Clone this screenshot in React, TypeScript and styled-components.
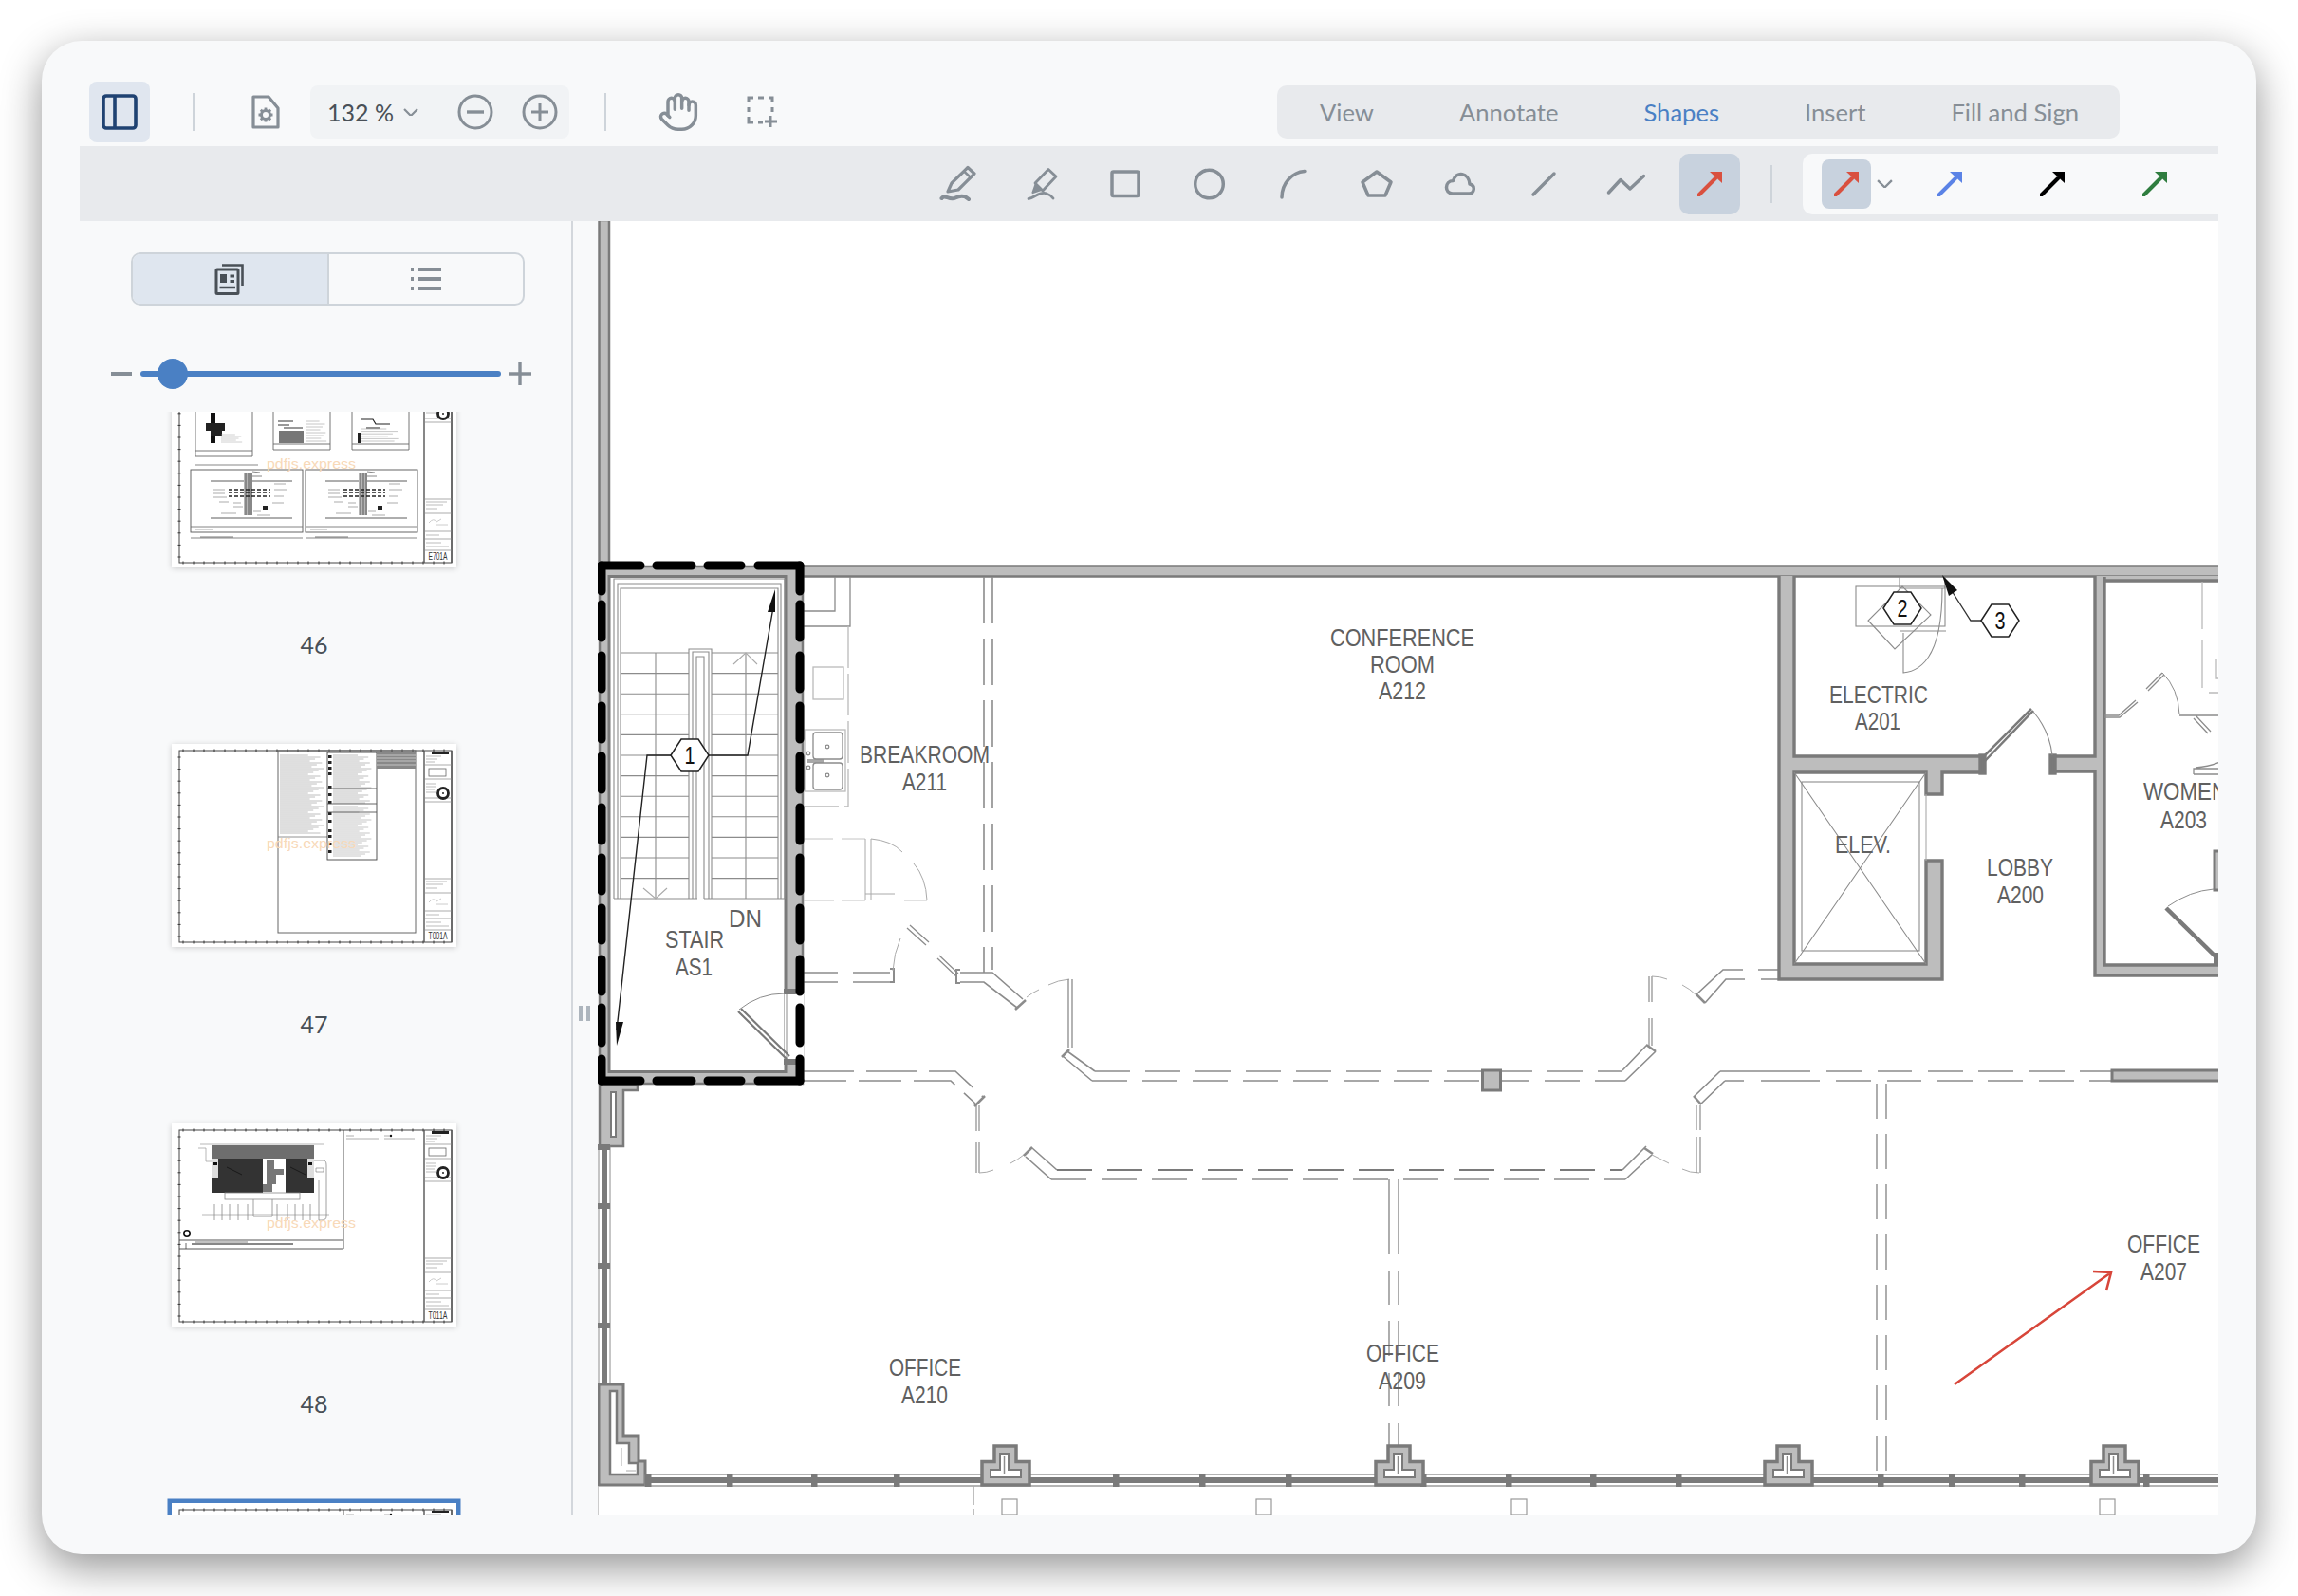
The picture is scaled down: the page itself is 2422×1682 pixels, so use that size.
import React from "react";
import styled, { createGlobalStyle } from "styled-components";
import { Hand } from "lucide-react";

const Global = createGlobalStyle`
  html, body { margin: 0; padding: 0; background: #fff; }
  #root { width: 2422px; height: 1682px; }
`;

const Page = styled.div`
  width: 2422px; height: 1682px; box-sizing: border-box; padding: 43px 44px 44px;
  background: #fff; overflow: hidden; font-family: Lato, "Noto Sans", sans-serif;
`;
const Card = styled.div`
  height: 1595px; box-sizing: border-box; padding: 43px 40px 41px; border-radius: 42px;
  background: #f8f9fa; box-shadow: 0 14px 44px rgba(0,0,0,.42); display: flex; flex-direction: column;
`;
const TopBar = styled.div`
  height: 64px; flex: none; display: flex; align-items: center; padding: 0 104px 0 10px; margin-bottom: 4px;
`;
const ToggleButton = styled.div`
  width: 64px; height: 64px; border-radius: 8px; background: #e0e6ef; display: flex; align-items: center; justify-content: center;
`;
const Divider = styled.div<{ $ml: number; $mr: number }>`
  width: 2px; height: 40px; background: #ced4da; flex: none; margin-left: ${p => p.$ml}px; margin-right: ${p => p.$mr}px;
`;
const PlainIcon = styled.div<{ $mr: number }>`
  display: flex; align-items: center; color: #868e96; margin-right: ${p => p.$mr}px;
`;
const ZoomBox = styled.div`
  width: 273px; height: 56px; box-sizing: border-box; padding-left: 18px; background: #f1f3f5; border-radius: 8px;
  display: flex; align-items: center; flex: none;
`;
const ZoomValue = styled.span`
  font-size: 25px; color: #495057; width: 80px; flex: none; white-space: nowrap;
`;
const ZoomChevron = styled.div`
  width: 57px; flex: none; display: flex;
`;
const ZoomAction = styled.div<{ $w: number }>`
  width: ${p => p.$w}px; flex: none; display: flex;
`;
const Tabs = styled.div`
  margin-left: auto; height: 56px; width: 888px; box-sizing: border-box; padding: 0 43px 0 45px; background: #e8eaed; border-radius: 10px;
  display: flex; align-items: center; justify-content: space-between;
`;
const Tab = styled.span<{ $active?: boolean }>`
  font-size: 25.6px; color: ${p => (p.$active ? "#4a80c4" : "#868e96")};
`;
const ShapeBar = styled.div`
  height: 79px; flex: none; background: #e8eaed; display: flex; align-items: center; justify-content: flex-end;
`;
const ToolGroup = styled.div`
  display: flex; gap: 24px;
`;
const Tool = styled.div<{ $active?: boolean }>`
  width: 64px; height: 64px; border-radius: 10px; display: flex; align-items: center; justify-content: center;
  background: ${p => (p.$active ? "#c8d2de" : "transparent")};
`;
const BarDivider = styled.div`
  width: 2px; height: 40px; margin: 0 32px; background: #ced4da;
`;
const PresetBox = styled.div`
  width: 438px; height: 64px; box-sizing: border-box; padding-left: 20px; border-radius: 10px 0 0 10px; background: #f8f9fa;
  display: flex; align-items: center;
`;
const Preset = styled.div<{ $active?: boolean }>`
  width: 52px; height: 52px; flex: none; border-radius: 8px; display: flex; align-items: center; justify-content: center;
  background: ${p => (p.$active ? "#c8d2de" : "transparent")};
`;
const PresetChevron = styled.div`
  width: 57px; padding-left: 6px; box-sizing: border-box; display: flex;
`;
const PresetGap = styled.div`
  width: 56px; flex: none;
`;
const Main = styled.div`
  flex: 1; min-height: 0; display: flex;
`;
const Sidebar = styled.aside`
  width: 520px; flex: none; box-sizing: border-box; padding-top: 33px; border-right: 2px solid #d3d7dc; display: flex; flex-direction: column;
`;
const Segments = styled.div`
  flex: none; align-self: flex-start; margin-left: 54px; width: 415px; height: 56px; box-sizing: border-box; border: 2px solid #ced4da; border-radius: 10px;
  display: flex; overflow: hidden;
`;
const Segment = styled.div<{ $active?: boolean }>`
  flex: 1; display: flex; align-items: center; justify-content: center; background: ${p => (p.$active ? "#dfe6ef" : "transparent")};
  & + & { border-left: 2px solid #ced4da; }
`;
const SliderRow = styled.div`
  flex: none; height: 32px; margin-top: 56px; padding-left: 33px; display: flex; align-items: center;
`;
const SliderMark = styled.div`
  display: flex; flex: none;
`;
const Track = styled.div`
  position: relative; width: 380px; height: 6px; margin: 0 8px 0 9px; border-radius: 3px; background: #4a80c4;
`;
const Thumb = styled.div`
  position: absolute; left: 18px; top: -13px; width: 32px; height: 32px; border-radius: 50%; background: #4a80c4;
`;
const ThumbScroll = styled.div`
  flex: 1; min-height: 0; margin-top: 24px; overflow: hidden; padding-left: 97px;
`;
const ThumbList = styled.div`
  margin-top: -50px; display: flex; flex-direction: column; width: 300px;
`;
const ThumbItem = styled.div`
  height: 400px; flex: none; display: flex; flex-direction: column; align-items: center;
`;
const Sheet = styled.div<{ $selected?: boolean }>`
  width: 300px; height: 214px; background: #fff; flex: none;
  box-shadow: ${p => (p.$selected ? "0 0 0 4.5px #4a80c4" : "0 1px 6px rgba(0,0,0,.18)")};
`;
const SheetArt = styled.svg`
  display: block; width: 300px; height: 214px;
`;
const PageNumber = styled.div`
  margin-top: 66px; height: 30px; line-height: 30px; font-size: 25px; color: #495057;
`;
const Viewer = styled.div`
  flex: 1; min-width: 0; display: flex;
`;
const Gutter = styled.div`
  width: 26px; flex: none; box-sizing: border-box; padding: 827px 0 0 6px; display: flex; gap: 4px;
`;
const GripBar = styled.div`
  width: 4px; height: 16px; background: #adb5bd;
`;
const Plan = styled.svg`
  flex: 1; display: block; width: 1708px; height: 1364px; background: #fff;
`;

const GREY = "#868e96";
const WALL = "#bdbdbd";
const INK = "#7a7a7a";
const THIN = "#8c8c8c";
const TXT = "#606060";

const ToolSvg = ({ children }: { children: React.ReactNode }) => (
  <svg width="64" height="64" viewBox="0 0 64 64" fill="none" stroke={GREY} strokeWidth="3.5" strokeLinecap="round" strokeLinejoin="round">
    {children}
  </svg>
);

const ArrowIcon = ({ color }: { color: string }) => (
  <svg width="26" height="26" viewBox="0 0 26 26">
    <path d="M1.5 24.5 L19 7" stroke={color} strokeWidth="4" strokeLinecap="round" />
    <path d="M13 0 H26 V12 Z" fill={color} />
  </svg>
);

const Chevron = ({ w = 16 }: { w?: number }) => (
  <svg width={w} height={w * 0.56} viewBox="0 0 16 9" fill="none" stroke={GREY} strokeWidth="2.2">
    <path d="M1 1 L8 8 L15 1" />
  </svg>
);

const shapeIcons: React.ReactNode[] = [
  <>
    <path d="M21 40 L25 31 L42 14.5 L49 21 L32 38 Z" strokeWidth="3.2" />
    <path d="M38 18.5 L45 25" strokeWidth="2.5" />
    <path d="M14.5 47 C17 42 23 50 29 46.5 C34 44 39 44 43 48" strokeWidth="4" />
  </>,
  <>
    <path d="M25 31 L39 16.5 L47 24 L33 39 Z" strokeWidth="2.8" />
    <path d="M22.5 41 L25.5 32.5 L31.5 38 Z" fill={GREY} strokeWidth="2.2" />
    <path d="M18 47.5 C24 47 30 39 37 42 C40 43 42 44 44 47" strokeWidth="2.8" />
  </>,
  <rect x="18" y="19" width="28" height="25.5" rx="1.5" />,
  <circle cx="32.5" cy="32" r="14.8" />,
  <path d="M21 46 C21 31 32 19.5 45 18.5" />,
  <path d="M33 19 L48 30 L42 44 L24 44 L18 30 Z" />,
  <path d="M25 42 H42.5 C48 42 49.5 33.5 43 32 C42 20 29 17.5 25.5 28.5 C16.5 28.5 16 42 25 42 Z" />,
  <path d="M22 43 L44 21" />,
  <path d="M13.5 41 L26 27.5 L36 37 L50.5 23.5" />,
];

/* ---------- thumbnails ---------- */
const idx = (n: number) => Array.from({ length: n }, (_, i) => i);

const Frame = ({ name }: { name?: string }) => (
  <g>
    <rect x="8" y="7" width="287" height="202" fill="none" stroke="#444" strokeWidth="1" />
    {idx(26).map(i => <path key={"t" + i} d={`M${12 + i * 11} 5.5 v3 M${12 + i * 11} 207.5 v3`} stroke="#333" strokeWidth="1" />)}
    {idx(16).map(i => <path key={"l" + i} d={`M6.5 ${14 + i * 12.6} h3`} stroke="#333" strokeWidth="1" />)}
    <path d="M266 7 V209 M295 7 V209" stroke="#555" strokeWidth="1.4" fill="none" />
    <path d="M266 22 H295 M266 37 H295 M266 57 H295 M266 61 H295 M266 142 H295 M266 157 H295 M266 176 H295 M266 184 H295 M266 196 H295" stroke="#888" strokeWidth=".7" />
    <rect x="274" y="8" width="18" height="3" fill="#222" />
    <path d="M268 13 h16 M268 16 h12 M268 19 h9" stroke="#aaa" strokeWidth=".8" />
    <rect x="271" y="26" width="18" height="8" fill="none" stroke="#666" strokeWidth=".8" />
    <path d="M268 42 h10 M268 45 h11 M268 48 h9 M268 51 h11" stroke="#aaa" strokeWidth=".8" />
    <circle cx="286" cy="52" r="5.5" fill="#fff" stroke="#222" strokeWidth="2.8" />
    <circle cx="286" cy="52" r="1" fill="#222" />
    <path d="M268 145 h22 M268 148 h18 M268 152 h12 M268 180 h14 M268 188 h16 M268 192 h24" stroke="#aaa" strokeWidth=".8" />
    <path d="M271 167 q5 -6 8 -1 l5 -3 M279 169 h12" stroke="#ccc" strokeWidth="1" fill="none" />
    {name && (
      <text x="280.5" y="206" textAnchor="middle" fontFamily="Liberation Sans" fontSize="10" fill="#333" textLength="20" lengthAdjust="spacingAndGlyphs">{name}</text>
    )}
  </g>
);

const Watermark = () => (
  <text x="147" y="110" textAnchor="middle" fontFamily="Liberation Sans" fontSize="14.5" fill="#f8d9b8" textLength="94" lengthAdjust="spacingAndGlyphs">pdfjs.express</text>
);

const TextBlock = ({ x, y, w, rows, step = 2, color = "#999" }: { x: number; y: number; w: number; rows: number; step?: number; color?: string }) => (
  <path
    d={idx(rows).map(i => `M${x} ${y + i * step} h${w * (0.62 + ((i * 7) % 10) * 0.038)}`).join(" ")}
    stroke={color}
    strokeWidth=".55"
    fill="none"
  />
);

const DetailPanel = ({ x }: { x: number }) => (
  <g transform={`translate(${x} 0)`}>
    <rect x="0" y="111" width="118" height="66" fill="none" stroke="#555" strokeWidth=".9" />
    <path d="M0 171 H118" stroke="#666" strokeWidth=".8" />
    <path d="M21 123 H107 M21 162 H107" stroke="#333" strokeWidth=".8" />
    <rect x="56" y="115" width="9" height="44" fill="#b5b5b5" />
    <path d="M58 115 V159 M61 115 V159 M64 115 V159" stroke="#333" strokeWidth=".7" />
    <path d="M40 132 h44 M40 135 h44 M40 139 h44" stroke="#222" strokeWidth="1.3" strokeDasharray="4 2" />
    <rect x="76" y="149" width="5" height="5" fill="#222" />
    <path d="M45 150 h10 M45 146 h8 M24 136 h12 M66 155 h8 M24 132 h12 M24 140 h14 M88 126 h12 M88 132 h14 M88 139 h10 M86 146 h12 M30 145 h10 M32 157 h16 M70 159 h14" stroke="#888" strokeWidth=".7" />
    <path d="M65 113 l8 1 M65 118 h10" stroke="#555" strokeWidth=".7" />
    <path d="M5 174 h18" stroke="#aaa" strokeWidth="1" />
    <path d="M0 183 H118" stroke="#888" strokeWidth="1.2" />
    <path d="M10 182 h35" stroke="#555" strokeWidth=".8" />
  </g>
);

const SheetE701 = () => (
  <SheetArt viewBox="0 0 300 214">
    <Frame name="E701A" />
    <path d="M25 0 V97 H85 V0 M25 91 H85 M107 0 V90 H167 V0 M107 84 H167 M190 0 V90 H250 V0 M190 84 H250" fill="none" stroke="#666" strokeWidth=".9" />
    <rect x="41" y="51" width="5" height="32" fill="#111" />
    <path d="M36 62 h20 v8 h-3 v6 h-12 v-6 h-5 Z" fill="#222" />
    <TextBlock x={52} y={74} w={24} rows={5} color="#aaa" />
    <rect x="113" y="70" width="26" height="13" fill="#777" />
    <path d="M112 60 h16 M112 64 h12 M118 67 h20" stroke="#333" strokeWidth="1" />
    <TextBlock x={142} y={60} w={22} rows={8} step={3} color="#999" />
    <path d="M200 58 h12 l3 5 h15 M205 67 h14" stroke="#222" strokeWidth="1.2" fill="none" />
    <TextBlock x={199} y={68} w={44} rows={6} step={2.6} color="#999" />
    <rect x="196" y="72" width="3" height="11" fill="#222" />
    <path d="M25 106 H91" stroke="#888" strokeWidth="1.2" />
    <DetailPanel x={20} />
    <DetailPanel x={141} />
    <Watermark />
  </SheetArt>
);

const SheetT001 = () => (
  <SheetArt viewBox="0 0 300 214">
    <Frame name="T001A" />
    <rect x="112" y="7" width="145" height="192" fill="none" stroke="#666" strokeWidth="1" />
    <path d="M112 98 H164" stroke="#777" strokeWidth=".8" />
    <TextBlock x={114} y={12} w={48} rows={42} color="#888" />
    <rect x="164" y="9" width="52" height="113" fill="#fff" stroke="#444" strokeWidth=".9" />
    <TextBlock x={170} y={12} w={42} rows={26} step={2} color="#888" />
    <TextBlock x={170} y={66} w={42} rows={27} step={2} color="#999" />
    {[12, 18, 24, 30, 44, 52, 60, 72, 80, 90, 96, 104, 112].map(y => <rect key={y} x="165" y={y} width="3.5" height="3" fill="#222" />)}
    <path d="M164 47 H216 M164 63 H216 M164 72 H216" stroke="#555" strokeWidth=".9" />
    <rect x="216" y="9" width="41" height="17" fill="#888" />
    <path d="M216 12 H257 M216 15 H257 M216 18 H257 M216 22 H257" stroke="#eee" strokeWidth=".6" />
    <Watermark />
  </SheetArt>
);

const SheetT011 = ({ partial }: { partial?: boolean }) => (
  <SheetArt viewBox="0 0 300 214">
    <Frame name={partial ? undefined : "T011A"} />
    <path d="M181 7 V132 M8 123 H181 M8 132 H181" stroke="#444" strokeWidth=".9" fill="none" />
    <path d="M21 127 H128" stroke="#111" strokeWidth="1" />
    <path d="M15 126 v6" stroke="#444" strokeWidth=".8" />
    <path d="M25 125 h55" stroke="#777" strokeWidth=".9" />
    <path d="M184 13 h8 M224 13 h8 M184 16 h34 M224 16 h32" stroke="#999" strokeWidth=".8" />
    <circle cx="231" cy="13" r="1.2" fill="#111" />
    <circle cx="16" cy="116" r="3.2" fill="#fff" stroke="#111" strokeWidth="1.6" />
    <rect x="42" y="23" width="108" height="14" fill="#6e6e6e" />
    <rect x="42" y="37" width="108" height="36" fill="#333" />
    <rect x="96" y="37" width="24" height="36" fill="#fff" />
    <path d="M100 38 h8 v10 h10 v6 h-8 v10 h-4 v8 h-10 v-8 h4 Z" fill="#777" />
    <rect x="42" y="37" width="7" height="20" fill="#ddd" />
    <rect x="143" y="37" width="7" height="20" fill="#ddd" />
    <rect x="44" y="41" width="4" height="3" fill="#111" />
    <rect x="144" y="41" width="4" height="3" fill="#111" />
    <path d="M58 46 l16 8 M125 46 l16 8" stroke="#111" strokeWidth=".8" />
    <path d="M30 22 H160 M28 26 H36 V40 H42 M32 96 H166" stroke="#999" strokeWidth=".7" fill="none" />
    <rect x="56" y="73" width="79" height="7" fill="none" stroke="#888" strokeWidth=".8" />
    <path d="M45 85 V102 M53 85 V102 M61 85 V102 M70 85 V102 M80 85 V102 M111 85 V102 M122 85 V102 M130 85 V102 M138 85 V102 M146 85 V102" stroke="#888" strokeWidth=".8" />
    <path d="M86 80 V98 H106 V80" fill="none" stroke="#888" strokeWidth=".8" />
    <path d="M150 39 H160 Q163 39 163 44 V98 Q163 102 158 102 H155 V60" fill="none" stroke="#888" strokeWidth=".8" />
    <path d="M152 47 h8 v4 h-8 Z" fill="none" stroke="#888" strokeWidth=".7" />
    {!partial && <Watermark />}
  </SheetArt>
);

/* ---------- floor plan ---------- */
const Room = ({ x, y, w, children }: { x: number; y: number; w: number; children: string }) => (
  <text x={x} y={y} textLength={w} lengthAdjust="spacingAndGlyphs" fontFamily="Liberation Sans" fontSize="25" fill={TXT}>{children}</text>
);

const Callout = ({ cx, cy, label }: { cx: number; cy: number; label: string }) => (
  <g>
    <path d={`M${cx - 20} ${cy} L${cx - 9} ${cy - 17} H${cx + 9} L${cx + 20} ${cy} L${cx + 9} ${cy + 17} H${cx - 9} Z`} fill="#fff" stroke="#222" strokeWidth="1.5" />
    <text x={cx} y={cy + 9} textAnchor="middle" fontFamily="Liberation Sans" fontSize="25" fill="#111" textLength="11" lengthAdjust="spacingAndGlyphs">{label}</text>
  </g>
);

const Pier = ({ x }: { x: number }) => (
  <g transform={`translate(${x} 1524)`}>
    <path d="M0 41 V16.5 H13 V0 H36 V16.5 H50 V41 Z" fill={WALL} stroke={INK} strokeWidth="3.5" />
    <path d="M19 8 H28 V25 H41 V33 H9 V25 H19 Z" fill="#fff" stroke={INK} strokeWidth="2" />
    <path d="M23.5 10 V29" stroke={THIN} strokeWidth="1.5" />
  </g>
);

const stairDashes: [number, number][] = [
  [596, 623], [637, 672], [691, 726], [744, 779], [797, 832], [851, 886], [904, 939], [957, 991], [1011, 1045], [1062, 1099], [1116, 1139],
];
const widthDashes: [number, number][] = [[634, 675], [692, 729], [746, 781], [799, 843]];
const mullions = [683, 769, 858, 945, 1176, 1267, 1358, 1500, 1590, 1679, 1769, 1982, 2057, 2131, 2262];
const boxes = [1056, 1324, 1593, 2213];
const treads = idx(12).map(i => 688 + i * 21.6);

const Blueprint = () => (
  <Plan viewBox="630 233 1708 1364">
    {/* left wall above stair, top wall */}
    <rect x="631.5" y="232" width="10.5" height="366" fill={WALL} stroke={INK} strokeWidth="2.5" />
    <rect x="846" y="596.5" width="1500" height="11" fill={WALL} stroke={INK} strokeWidth="2.5" />

    {/* stair enclosure */}
    <rect x="632" y="597" width="214" height="545" fill={WALL} stroke={INK} strokeWidth="2.5" />
    <rect x="642" y="607.5" width="186" height="522" fill="#fff" stroke={INK} strokeWidth="3" />
    <rect x="827" y="1048" width="20" height="68" fill="#fff" />
    <rect x="826" y="1042" width="13" height="6" fill={INK} />
    <rect x="826" y="1116" width="13" height="6" fill={INK} />
    <path d="M829 1048 V1116" stroke={THIN} strokeWidth="1" />
    <path d="M778 1066 L829 1116 M781 1063 L832 1113" stroke={INK} strokeWidth="2.2" />
    <path d="M779 1064 Q800 1047 827 1047" stroke={THIN} strokeWidth="1" fill="none" />
    <g stroke={THIN} strokeWidth="1.1" fill="none">
      <path d="M647 947 V610 H827 V947 M651 947 V615 H823 V947 M654 947 V620 H820 V947" />
      <path d="M647 947 H735 M742 947 H827" />
      <path d="M726 947 V684 H750 V947 M730 947 V687 H747 V947 M734 947 V692 H742 V947" />
      {treads.map(y => <path key={y} d={`M654 ${y} H726 M750 ${y} H820`} />)}
      <path d="M691 688 V947 M786 688 V947" />
      <path d="M773 700 L786 688 L798 700 M678 936 L691 947 L703 936" stroke="#aaa" />
    </g>
    <path d="M707 796 H682 L650 1085 M747 796 H788 L815 640" fill="none" stroke="#222" strokeWidth="1.4" />
    <path d="M650 1102 L649 1077 L657 1077 Z M817 621 L809 645 L817 645 Z" fill="#111" />
    <Callout cx={727} cy={796} label="1" />
    <Room x={768} y={977} w={35}>DN</Room>
    <Room x={701} y={999} w={62}>STAIR</Room>
    <Room x={712} y={1028} w={39}>AS1</Room>

    {/* breakroom */}
    <g fill="none" stroke={THIN} strokeWidth="1.3">
      <path d="M880 608 V644 H847 M896 608 V660 H847" />
      <path d="M894 660 V850 H847" strokeDasharray="44 6" stroke="#bbb" />
      <rect x="857" y="703" width="32" height="34" stroke="#bbb" />
      <rect x="848" y="769" width="43" height="65" stroke="#bbb" />
      <rect x="857" y="772" width="31" height="28" rx="3" />
      <rect x="857" y="804" width="31" height="28" rx="3" />
      <circle cx="872" cy="787" r="1.8" />
      <circle cx="872" cy="817" r="1.8" />
      <circle cx="852" cy="794" r="1.8" />
      <circle cx="852" cy="809" r="1.8" />
      <path d="M851 801 H868 M851 803 H868" />
      <path d="M847 884 H878 M887 884 H912 M847 949 H879 M887 949 H912 M953 949 H977" stroke="#c4c4c4" strokeWidth="1" />
      <path d="M912 884 V949 M918 884 V949 M912 942 H943" stroke="#aaa" strokeWidth="1" />
      <path d="M918 884 Q940 886 951 898 M963 910 Q976 925 977 949" stroke="#aaa" strokeWidth="1" />
    </g>
    <g fill="none" stroke={THIN} strokeWidth="1.6">
      <path d="M1037 608 V1025 M1046 608 V1022" strokeDasharray="49 16" />
      <path d="M847 1025 H883 M899 1025 H938 M847 1035 H883 M899 1035 H938" />
      <path d="M938 1021 h4 v14 h-4" strokeWidth="2" />
      <path d="M941 1023 Q942 1005 949 989" strokeWidth="1" stroke="#aaa" />
      <path d="M959 975 L979 993 M956 978 L976 996" strokeWidth="1.3" />
      <path d="M990 1007 L1010 1026 M988 1010 L1008 1029" strokeWidth="1.3" />
      <path d="M1012 1022 h-4 v14 h4" strokeWidth="2" />
      <path d="M1012 1025 H1046 L1078 1053 M1012 1035 H1037 L1072 1062" />
      <path d="M1070 1064 L1081 1054" strokeWidth="2.5" />
      <path d="M1082 1051 Q1088 1046 1095 1043 M1105 1038 Q1115 1033 1127 1032" strokeWidth="1" stroke="#aaa" />
      <path d="M1126 1032 V1104 M1130 1032 V1104" strokeWidth="1.3" />
    </g>

    {/* corridors */}
    <g fill="none" stroke={THIN} strokeWidth="1.6">
      <path d="M847 1129 H1007 L1036 1156" strokeDasharray="53 13" />
      <path d="M847 1139 H1002 L1028 1163" strokeDasharray="45 13" />
      <path d="M1027 1166 L1038 1155" strokeWidth="2.5" />
      <path d="M1029 1165 V1192 M1032 1165 V1192 M1029 1204 V1236 M1032 1204 V1236" strokeWidth="1.2" />
      <path d="M1032 1236 Q1040 1236 1047 1233 M1065 1226 Q1073 1222 1079 1217" strokeWidth="1" stroke="#aaa" />
      <path d="M1079 1218 L1088 1209" strokeWidth="2.5" />
      <path d="M1088 1210 L1114 1233" />
      <path d="M1081 1219 L1108 1243" />
      <path d="M1114 1233 H1710" strokeDasharray="37 16" strokeWidth="2" stroke={INK} />
      <path d="M1108 1243 H1713" strokeDasharray="37 16" />
      <path d="M1710 1233 L1735 1208 M1713 1243 L1741 1217" />
      <path d="M1733 1210 L1742 1216" strokeWidth="2.5" />
      <path d="M1741 1217 Q1749 1221 1759 1226 M1773 1232 Q1781 1236 1791 1236" strokeWidth="1" stroke="#aaa" />
      <path d="M1788 1165 V1191 M1792 1165 V1191 M1788 1198 V1236 M1792 1198 V1236" strokeWidth="1.2" />
      <path d="M1154 1129 H1710" strokeDasharray="37 16" />
      <path d="M1151 1139 H1713" strokeDasharray="37 16" />
      <path d="M1125 1108 L1154 1129 M1120 1113 L1151 1139" />
      <path d="M1119 1114 L1127 1106" strokeWidth="2.5" />
      <path d="M1710 1128 L1735 1102 M1713 1139 L1745 1108" />
      <path d="M1735 1101 L1745 1108" strokeWidth="2.5" />
      <path d="M1738 1029 V1056 M1741 1029 V1056 M1738 1073 V1102 M1741 1073 V1102" strokeWidth="1.2" />
      <path d="M1741 1029 Q1750 1029 1757 1032 M1773 1038 Q1781 1042 1788 1049" strokeWidth="1" stroke="#aaa" />
      <path d="M1788 1048 L1797 1057" strokeWidth="2.5" />
      <path d="M1788 1048 L1816 1022 H1837 M1853 1022 H1875 M1797 1057 L1819 1032 H1839 M1856 1032 H1875" />
      <path d="M1786 1155 L1813 1129 M1792 1164 L1818 1139" />
      <path d="M1785 1155 L1793 1164" strokeWidth="2.5" />
      <path d="M1813 1129 H1908 M1925 1129 H1962 M1979 1129 H2015 M2032 1129 H2069 M2085 1129 H2122 M2139 1129 H2176 M2192 1129 H2226" />
      <path d="M1818 1139 H1838 M1856 1139 H1918 M1935 1139 H1972 M1989 1139 H2025 M2042 1139 H2079 M2095 1139 H2132 M2149 1139 H2186 M2202 1139 H2226" />
      <path d="M1978 1139 V1554 M1988 1139 V1554" strokeDasharray="37 16" strokeDashoffset="-3" strokeWidth="1.4" />
      <path d="M1464 1243 V1322 M1474 1243 V1322 M1464 1340 V1375 M1474 1340 V1375 M1464 1392 V1429 M1474 1392 V1429 M1464 1447 V1482 M1474 1447 V1482 M1464 1500 V1524 M1474 1500 V1524" strokeWidth="1.4" />
    </g>
    <rect x="1562.5" y="1128" width="19" height="21" fill={WALL} stroke={INK} strokeWidth="3" />
    <rect x="2226" y="1128" width="114" height="11" fill={WALL} stroke={INK} strokeWidth="3" />

    {/* electric, elevator, lobby, women walls */}
    <rect x="1875" y="607" width="16" height="425" fill={WALL} />
    <rect x="1875" y="1016" width="172" height="16" fill={WALL} />
    <rect x="2030" y="907" width="17" height="125" fill={WALL} />
    <rect x="1891" y="797" width="199" height="17" fill={WALL} />
    <rect x="2030" y="813" width="17" height="24" fill={WALL} />
    <rect x="2165" y="797" width="43" height="17" fill={WALL} />
    <rect x="2208" y="607" width="10" height="421" fill={WALL} />
    <rect x="2208" y="1017" width="132" height="11" fill={WALL} />
    <rect x="2218" y="607" width="122" height="5" fill={WALL} />
    <g fill="none" stroke={INK} strokeWidth="3.4">
      <path d="M1875 607 V1032 H2047 V907 H2030 V1016 H1891 V814 H2030 V837 H2047 V814 H2090" />
      <path d="M1891 607 V797 H2090" />
      <path d="M2165 797 H2208 V607 M2165 813 H2208 V1028 H2340 M2218 608 V1017 H2340 M2218 612 H2340" />
      <rect x="2087" y="796" width="5" height="19" fill={INK} />
      <rect x="2161" y="796" width="5" height="19" fill={INK} />
      <path d="M2092 802 L2143 749" strokeWidth="2.5" />
      <path d="M2090 798 L2141 747" strokeWidth="2.5" />
    </g>
    <g fill="none" stroke={THIN} strokeWidth="1.1">
      <path d="M2143 750 Q2160 770 2163 796" />
      <rect x="1899" y="824" width="124" height="178" />
      <path d="M1891 814 L2030 1016 M2030 814 L1891 1016" />
      <path d="M2030 837 V907" stroke="#aaa" />
      <rect x="1956" y="618" width="94" height="42" />
      <path d="M2002 608 V620 H2050 V608 M1969 654 L1997 684 L2035 648 L2005 618 Z" />
      <path d="M2006 667 V709 Q2047 705 2047 620 M2003 665 H2051" />
    </g>
    <path d="M2089 654 H2077 L2054 618" fill="none" stroke="#333" strokeWidth="1.3" />
    <path d="M2047 606 L2054 628 L2063 622 Z" fill="#111" />
    <Callout cx={2005} cy={641} label="2" />
    <Callout cx={2108} cy={654} label="3" />
    <g fill="none" stroke={THIN} strokeWidth="1.3">
      <path d="M2218 754 H2233 L2251 738 M2218 756 H2234 L2253 740" />
      <path d="M2262 726 L2279 709 M2264 728 L2281 711" />
      <path d="M2279 709 Q2296 726 2297 753" strokeWidth="1" />
      <path d="M2297 754 H2340 M2312 757 L2327 773 M2315 755 L2330 771" />
      <path d="M2321 613 V730 H2340" stroke="#bbb" strokeDasharray="50 12" />
      <path d="M2336 695 V715 H2340" stroke="#bbb" />
      <path d="M2312 816 V810 H2340 M2312 816 H2340 M2314 809 Q2328 808 2340 803" />
      <path d="M2285 955 Q2308 939 2333 937" strokeWidth="1" />
    </g>
    <rect x="2334" y="897" width="8" height="41" fill={WALL} stroke={INK} strokeWidth="3" />
    <path d="M2283 957 L2335 1008" stroke={INK} strokeWidth="4.5" />
    <rect x="2333" y="1004" width="6" height="12" fill={INK} />

    {/* outer bottom and left walls */}
    <path d="M632 1143 H672 V1149 H657 V1208 H632 Z" fill={WALL} stroke={INK} strokeWidth="2.5" />
    <rect x="644" y="1151" width="5" height="47" fill="#fff" stroke={INK} strokeWidth="2" />
    <rect x="631" y="1208" width="12" height="251" fill="#fff" stroke={THIN} strokeWidth="1" />
    <rect x="634" y="1208" width="6" height="251" fill={INK} />
    {[1209, 1271, 1334, 1397].map(y => <rect key={y} x="630" y={y - 3} width="13" height="6" fill={INK} />)}
    <path d="M631 1459 H657 V1513 H673 V1540 H680 V1565 H631 Z" fill={WALL} stroke={INK} strokeWidth="3" />
    <path d="M643 1466 H650 V1521 H663 V1542 H672 V1554 H643 Z" fill="#fff" stroke={INK} strokeWidth="2.5" />
    <path d="M655 1526 V1545 M660 1550 H670" stroke="#aaa" strokeWidth="1" />
    <rect x="680" y="1554" width="1670" height="12" fill="#fff" stroke={THIN} strokeWidth="1.3" />
    <rect x="680" y="1557" width="1670" height="6" fill={INK} />
    {mullions.map(x => <rect key={x} x={x - 3} y="1553" width="6.5" height="14" fill={INK} />)}
    <Pier x={1035} />
    <Pier x={1450} />
    <Pier x={1860} />
    <Pier x={2204} />
    <path d="M630 1566 V1600" stroke="#bbb" strokeWidth="1.5" />
    <path d="M1026 1566 V1586 M1026 1590 V1600" stroke="#aaa" strokeWidth="1.5" />
    {boxes.map(x => <rect key={x} x={x} y="1580" width="16" height="17" fill="#fff" stroke="#999" strokeWidth="1.2" />)}

    {/* room labels */}
    <Room x={906} y={804} w={137}>BREAKROOM</Room>
    <Room x={951} y={833} w={47}>A211</Room>
    <Room x={1402} y={681} w={152}>CONFERENCE</Room>
    <Room x={1444} y={709} w={68}>ROOM</Room>
    <Room x={1453} y={737} w={50}>A212</Room>
    <Room x={1928} y={741} w={104}>ELECTRIC</Room>
    <Room x={1955} y={769} w={48}>A201</Room>
    <Room x={1934} y={899} w={59}>ELEV.</Room>
    <Room x={2094} y={923} w={70}>LOBBY</Room>
    <Room x={2105} y={952} w={49}>A200</Room>
    <Room x={2259} y={843} w={88}>WOMEN</Room>
    <Room x={2277} y={873} w={49}>A203</Room>
    <Room x={937} y={1450} w={76}>OFFICE</Room>
    <Room x={950} y={1479} w={49}>A210</Room>
    <Room x={1440} y={1435} w={77}>OFFICE</Room>
    <Room x={1453} y={1464} w={50}>A209</Room>
    <Room x={2242} y={1320} w={77}>OFFICE</Room>
    <Room x={2256} y={1349} w={49}>A207</Room>

    {/* red arrow annotation */}
    <path d="M2060 1459 L2225 1341 M2206 1340 L2225 1341 L2220 1360" fill="none" stroke="#d8463a" strokeWidth="2.6" />

    {/* dashed stair selection */}
    <g stroke="#000" strokeWidth="9" strokeLinecap="round" fill="none">
      {stairDashes.map(([a, b]) => (
        <path key={a} d={`M634 ${a} V${b} M843 ${a} V${b}`} />
      ))}
      {widthDashes.map(([a, b]) => (
        <path key={a} d={`M${a} 596 H${b} M${a} 1139 H${b}`} />
      ))}
    </g>
  </Plan>
);

export default function App() {
  return (
    <>
      <Global />
      <Page>
        <Card>
          <TopBar>
            <ToggleButton>
              <svg width="38" height="38" viewBox="0 0 38 38" fill="none" stroke="#1f4272" strokeWidth="3.6">
                <rect x="2" y="2" width="34" height="34" rx="3" />
                <path d="M14 2 V36" />
              </svg>
            </ToggleButton>
            <Divider $ml={45} $mr={60} />
            <PlainIcon $mr={32}>
              <svg width="30" height="38" viewBox="0 0 30 38" fill="none" stroke={GREY} strokeWidth="3.2" strokeLinejoin="round">
                <path d="M2 3 H18 L28 15 V35 H2 Z" />
                <circle cx="15" cy="22" r="4.5" strokeWidth="3" />
                <path d="M15 14.5 V17 M15 27 V29.5 M7.5 22 H10 M20 22 H22.5 M9.8 16.8 L11.5 18.5 M18.5 25.5 L20.2 27.2 M20.2 16.8 L18.5 18.5 M11.5 25.5 L9.8 27.2" strokeWidth="2.8" />
              </svg>
            </PlainIcon>
            <ZoomBox>
              <ZoomValue>132 %</ZoomValue>
              <ZoomChevron><Chevron /></ZoomChevron>
              <ZoomAction $w={68}>
                <svg width="38" height="38" viewBox="0 0 38 38" fill="none" stroke={GREY} strokeWidth="3">
                  <circle cx="19" cy="19" r="17" />
                  <path d="M10 19 H28" strokeWidth="3.4" />
                </svg>
              </ZoomAction>
              <ZoomAction $w={38}>
                <svg width="38" height="38" viewBox="0 0 38 38" fill="none" stroke={GREY} strokeWidth="3">
                  <circle cx="19" cy="19" r="17" />
                  <path d="M10 19 H28 M19 10 V28" />
                </svg>
              </ZoomAction>
            </ZoomBox>
            <Divider $ml={37} $mr={54} />
            <PlainIcon $mr={49}>
              <Hand size={44} strokeWidth={1.9} />
            </PlainIcon>
            <PlainIcon $mr={0}>
              <svg width="34" height="34" viewBox="0 0 34 34" fill="none" stroke={GREY} strokeWidth="3">
                <path d="M3 7 V2 H8 M13 2 H19 M24 2 H28 V7 M28 12 V17 M3 12 V17 M3 22 V28 H8 M13 28 H18" />
                <path d="M26 21 V33 M20 27 H33" strokeWidth="3" />
              </svg>
            </PlainIcon>
            <Tabs>
              <Tab>View</Tab>
              <Tab>Annotate</Tab>
              <Tab $active>Shapes</Tab>
              <Tab>Insert</Tab>
              <Tab>Fill and Sign</Tab>
            </Tabs>
          </TopBar>
          <ShapeBar>
            <ToolGroup>
              {shapeIcons.map((icon, i) => (
                <Tool key={i}><ToolSvg>{icon}</ToolSvg></Tool>
              ))}
              <Tool $active><ArrowIcon color="#d9503f" /></Tool>
            </ToolGroup>
            <BarDivider />
            <PresetBox>
              <Preset $active><ArrowIcon color="#d9503f" /></Preset>
              <PresetChevron><Chevron w={17} /></PresetChevron>
              <Preset><ArrowIcon color="#5b83e6" /></Preset>
              <PresetGap />
              <Preset><ArrowIcon color="#000" /></Preset>
              <PresetGap />
              <Preset><ArrowIcon color="#2f7d3f" /></Preset>
            </PresetBox>
          </ShapeBar>
          <Main>
            <Sidebar>
              <Segments>
                <Segment $active>
                  <svg width="32" height="34" viewBox="0 0 32 34" fill="none" stroke="#495057">
                    <path d="M8 2.5 H29.5 V24" strokeWidth="2.6" />
                    <rect x="2" y="7" width="23" height="25.5" rx="1" strokeWidth="3" />
                    <rect x="6" y="12" width="7" height="9" fill="#495057" strokeWidth="0" />
                    <rect x="16.5" y="12.5" width="4.5" height="3" fill="#495057" strokeWidth="0" />
                    <rect x="16.5" y="18" width="4.5" height="3" fill="#495057" strokeWidth="0" />
                    <path d="M5.5 26 H22" strokeWidth="2.6" />
                  </svg>
                </Segment>
                <Segment>
                  <svg width="34" height="26" viewBox="0 0 34 26" fill="none" stroke={GREY} strokeWidth="4">
                    <path d="M9 3 H33 M9 13 H33 M9 23 H33" />
                    <path d="M1 3 H4 M1 13 H4 M1 23 H4" />
                  </svg>
                </Segment>
              </Segments>
              <SliderRow>
                <SliderMark>
                  <svg width="22" height="22" viewBox="0 0 22 22" stroke={GREY} strokeWidth="4"><path d="M0 11 H22" /></svg>
                </SliderMark>
                <Track><Thumb /></Track>
                <SliderMark>
                  <svg width="24" height="24" viewBox="0 0 24 24" stroke={GREY} strokeWidth="3.4"><path d="M0 12 H24 M12 0 V24" /></svg>
                </SliderMark>
              </SliderRow>
              <ThumbScroll>
                <ThumbList>
                  <ThumbItem><Sheet><SheetE701 /></Sheet><PageNumber>46</PageNumber></ThumbItem>
                  <ThumbItem><Sheet><SheetT001 /></Sheet><PageNumber>47</PageNumber></ThumbItem>
                  <ThumbItem><Sheet><SheetT011 /></Sheet><PageNumber>48</PageNumber></ThumbItem>
                  <ThumbItem><Sheet $selected><SheetT011 partial /></Sheet></ThumbItem>
                </ThumbList>
              </ThumbScroll>
            </Sidebar>
            <Viewer>
              <Gutter><GripBar /><GripBar /></Gutter>
              <Blueprint />
            </Viewer>
          </Main>
        </Card>
      </Page>
    </>
  );
}
